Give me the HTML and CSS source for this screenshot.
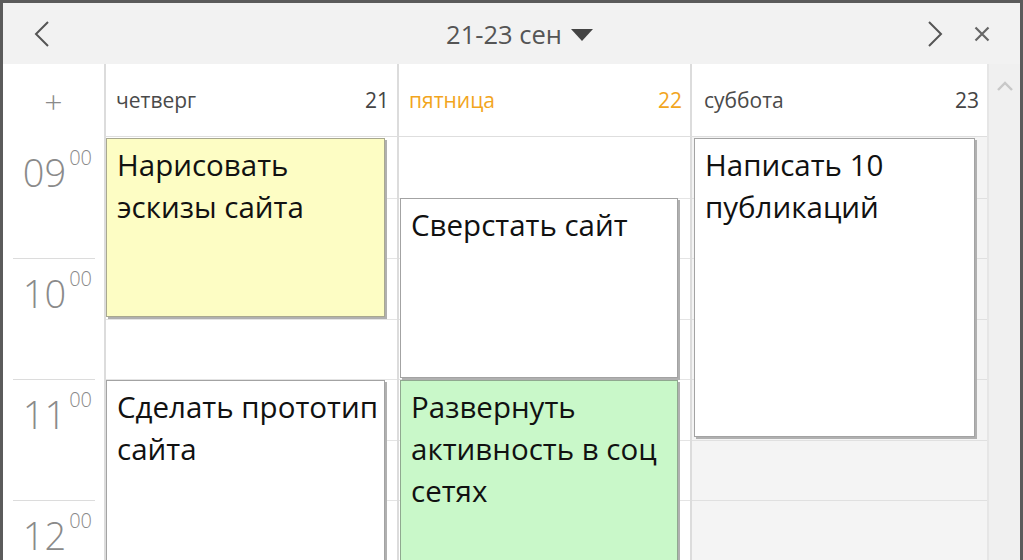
FILE: index.html
```html
<!DOCTYPE html>
<html lang="ru">
<head>
<meta charset="utf-8">
<link rel="stylesheet" href="styles.css">
</head>
<body>
<div class="frame">
  <div class="topbar">
    <button class="nav prev" aria-label="Назад">
      <svg width="18" height="26" viewBox="0 0 18 26"><path d="M15 1 L3 13 L15 25" fill="none" stroke="#555" stroke-width="2"/></svg>
    </button>
    <div class="title">21-23 сен <span class="caret"></span></div>
    <button class="nav next" aria-label="Вперёд">
      <svg width="18" height="26" viewBox="0 0 18 26"><path d="M3 1 L15 13 L3 25" fill="none" stroke="#555" stroke-width="2"/></svg>
    </button>
    <button class="nav close" aria-label="Закрыть">
      <svg width="16" height="16" viewBox="0 0 16 16"><path d="M1.5 1.5 L14.5 14.5 M14.5 1.5 L1.5 14.5" fill="none" stroke="#666" stroke-width="2.2"/></svg>
    </button>
  </div>
  <div class="main">
    <div class="calendar">
      <div class="head">
        <div class="gutter-head"><span class="plus">+</span></div>
        <div class="day-head"><span class="dname">четверг</span><span class="dnum">21</span></div>
        <div class="day-head today"><span class="dname">пятница</span><span class="dnum">22</span></div>
        <div class="day-head weekend-head"><span class="dname">суббота</span><span class="dnum">23</span></div>
      </div>
      <div class="body">
        <div class="gutter">
          <div class="hour first"><span class="hl">09<sup>00</sup></span></div>
          <div class="hour"><span class="hl">10<sup>00</sup></span></div>
          <div class="hour"><span class="hl">11<sup>00</sup></span></div>
          <div class="hour"><span class="hl">12<sup>00</sup></span></div>
        </div>
        <div class="day">
          <div class="slot first"></div><div class="slot"></div><div class="slot"></div><div class="slot"></div>
          <div class="event yellow" style="top:1px;height:179px;">Нарисовать эскизы сайта</div>
          <div class="event" style="top:243px;height:200px;">Сделать прототип сайта</div>
        </div>
        <div class="day mid">
          <div class="slot first"></div><div class="slot"></div><div class="slot"></div><div class="slot"></div>
          <div class="event" style="top:61px;height:180px;">Сверстать сайт</div>
          <div class="event green" style="top:243px;height:200px;">Развернуть активность в соц сетях</div>
        </div>
        <div class="day weekend">
          <div class="slot first"></div><div class="slot"></div><div class="slot"></div><div class="slot"></div>
          <div class="event" style="top:1px;height:299px;">Написать 10 публикаций</div>
        </div>
      </div>
    </div>
    <div class="scrollbar">
      <svg width="18" height="12" viewBox="0 0 18 12"><path d="M2 10 L9 3 L16 10" fill="none" stroke="#c8c8c8" stroke-width="2.4"/></svg>
    </div>
  </div>
</div>
</body>
</html>
```
FILE: styles.css
```css
* { box-sizing: border-box; }
html, body { margin: 0; padding: 0; }
body {
  width: 1023px;
  height: 560px;
  overflow: hidden;
  background: #ffffff;
  font-family: "Open Sans", "Noto Sans", sans-serif;
}
.frame {
  width: 1023px;
  height: 560px;
  border: 3px solid #5b5b5b;
  border-bottom: none;
  display: flex;
  flex-direction: column;
  overflow: hidden;
}
.topbar {
  height: 61px;
  flex: none;
  background: #f2f2f2;
  display: flex;
  align-items: center;
}
.nav {
  border: none;
  background: transparent;
  padding: 0;
  display: flex;
  align-items: center;
  justify-content: center;
}
.prev { margin-left: 30px; width: 18px; height: 26px; }
.title {
  flex: 1;
  font-size: 25.5px;
  color: #555;
  display: flex;
  justify-content: center;
  align-items: center;
  gap: 9px;
  padding-left: 62px;
}
.caret {
  width: 0; height: 0;
  border-left: 11px solid transparent;
  border-right: 11px solid transparent;
  border-top: 12px solid #444;
  margin-top: 2px;
}
.next { width: 18px; height: 26px; margin-right: 30px; }
.close { width: 16px; height: 16px; margin-right: 30px; }

.main {
  flex: 1;
  display: flex;
  min-height: 0;
}
.calendar {
  flex: 1;
  display: flex;
  flex-direction: column;
  min-width: 0;
}
.head, .body {
  display: grid;
  grid-template-columns: 101px 293px 293px 1fr;
}
.head {
  height: 73px;
  flex: none;
}
.gutter-head {
  display: flex;
  align-items: center;
  justify-content: center;
}
.plus {
  font-size: 32px;
  font-weight: 300;
  color: #8a8a8a;
  line-height: 1;
  margin-top: 2px;
}
.day-head {
  border-left: 2px solid #dcdcdc;
  border-bottom: 1px solid #dedede;
  display: flex;
  align-items: center;
  justify-content: space-between;
  padding: 0 8px 0 10px;
}
.weekend-head { padding-left: 12px; }
.dname { font-size: 21px; color: #4a4a4a; }
.dnum { font-size: 21px; color: #444; }
.today .dname, .today .dnum { color: #f2a51d; }

.body {
  flex: 1;
  overflow: hidden;
}
.gutter { display: flex; flex-direction: column; }
.hour {
  height: 121px;
  flex: none;
  margin: 0 9px 0 10px;
  border-top: 1px solid #dcdcdc;
  position: relative;
}
.hour.first { border-top-color: transparent; }
.hl {
  position: absolute;
  right: 3px;
  top: 10px;
  font-size: 38px;
  font-weight: 300;
  color: #8a8a8a;
  line-height: 1.3;
  white-space: nowrap;
}
.hl sup {
  font-size: 20px;
  vertical-align: top;
  position: relative;
  top: -3px;
  margin-left: 3px;
}
.day {
  border-left: 2px solid #dcdcdc;
  position: relative;
  display: flex;
  flex-direction: column;
}
.weekend { background: #f4f4f4; }
.slot {
  height: 121px;
  flex: none;
  border-top: 1px solid #e4e4e4;
  position: relative;
}
.slot.first { border-top-color: transparent; }
.slot::after {
  content: "";
  position: absolute;
  left: 0; right: 0;
  top: 60px;
  border-top: 1px solid #e4e4e4;
}
.weekend .slot, .weekend .slot::after { border-top-color: #e0e0e0; }
.weekend .slot.first { border-top-color: transparent; }
.event {
  position: absolute;
  left: 0;
  right: 12px;
  background: #ffffff;
  border: 1px solid #a3a3a3;
  box-shadow: 2px 2px 0 #b0b0b0;
  padding: 5px 0 0 10px;
  font-size: 29.5px;
  line-height: 42px;
  color: #111;
  z-index: 1;
}
.mid .event { left: 1px; }
.weekend .event { left: 2px; }
.event.yellow { background: #fdfdc4; border-color: #a8a890; }
.event.green { background: #c9f8c9; border-color: #90a890; }

.scrollbar {
  width: 33px;
  flex: none;
  background: #f0f0f0;
  border-left: 2px solid #e6e6e6;
  display: flex;
  justify-content: center;
  align-items: flex-start;
  padding-top: 16px;
}
```
